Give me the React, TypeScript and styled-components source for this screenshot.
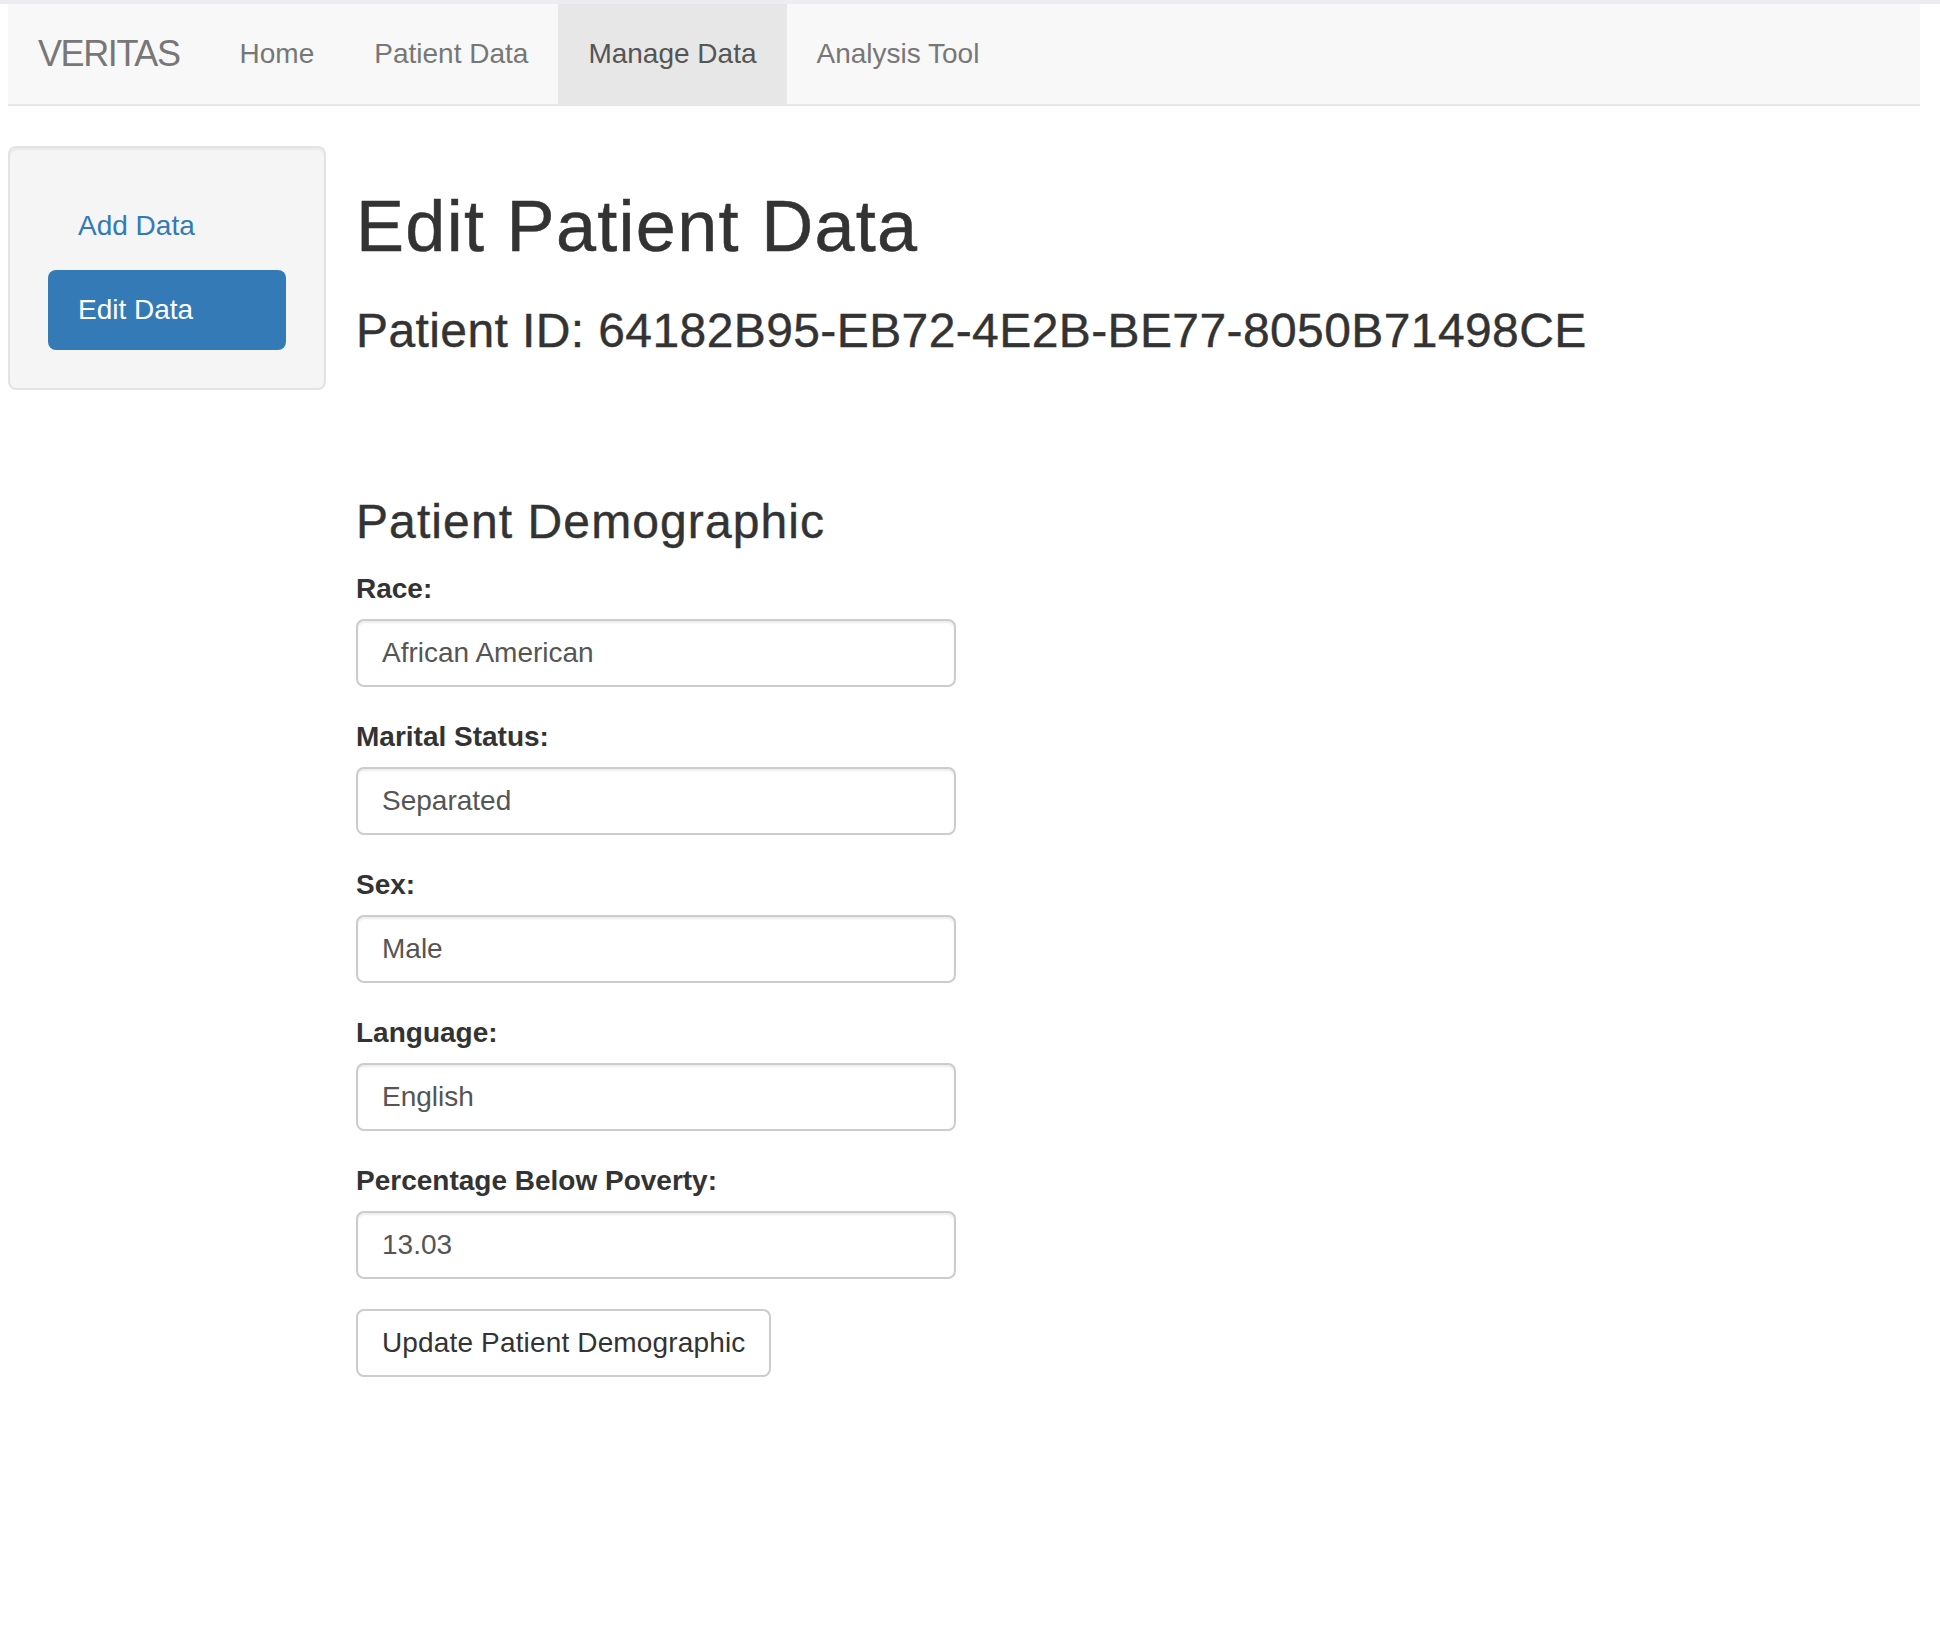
import React from "react";
import styled, { createGlobalStyle } from "styled-components";

const GlobalStyle = createGlobalStyle`
  html, body {
    margin: 0;
    padding: 0;
    background: #ffffff;
  }
  body {
    font-family: "Liberation Sans", Arial, Helvetica, sans-serif;
    font-size: 28px;
    line-height: 40px;
    color: #333333;
  }
  * { box-sizing: border-box; }
`;

const TopStrip = styled.div`
  height: 4px;
  background: #ececf1;
`;

const Page = styled.div`
  padding: 0 20px 0 8px;
`;

const Navbar = styled.nav`
  display: flex;
  align-items: stretch;
  height: 102px;
  background: #f8f8f8;
  border-bottom: 2px solid #e7e7e7;
  margin-bottom: 40px;
`;

const Brand = styled.a`
  display: block;
  padding: 30px;
  font-size: 36px;
  line-height: 40px;
  letter-spacing: -1.4px;
  color: #777777;
  text-decoration: none;
`;

const NavList = styled.ul`
  display: flex;
  margin: 0;
  padding: 0;
  list-style: none;
`;

const NavLink = styled.a<{ $active?: boolean }>`
  display: block;
  padding: 30px;
  font-size: 28px;
  line-height: 40px;
  text-decoration: none;
  color: ${(p) => (p.$active ? "#555555" : "#777777")};
  background: ${(p) => (p.$active ? "#e7e7e7" : "transparent")};
`;

const Layout = styled.div`
  display: grid;
  grid-template-columns: 318px 1fr;
  column-gap: 30px;
  align-items: start;
`;

const Well = styled.div`
  background: #f5f5f5;
  border: 2px solid #e3e3e3;
  border-radius: 8px;
  padding: 38px;
  box-shadow: inset 0 2px 2px rgba(0, 0, 0, 0.05);
`;

const Pills = styled.ul`
  display: flex;
  flex-direction: column;
  gap: 4px;
  margin: 0;
  padding: 0;
  list-style: none;
`;

const Pill = styled.a<{ $active?: boolean }>`
  display: block;
  padding: 20px 30px;
  font-size: 28px;
  line-height: 40px;
  border-radius: 8px;
  text-decoration: none;
  color: ${(p) => (p.$active ? "#ffffff" : "#337ab7")};
  background: ${(p) => (p.$active ? "#337ab7" : "transparent")};
`;

const Main = styled.main`
  min-width: 0;
`;

const Title = styled.h1`
  margin: 41px 0 20px;
  font-size: 72px;
  line-height: 1.1;
  font-weight: 500;
  letter-spacing: 1.3px;
  color: #333333;
  -webkit-text-stroke: 0.5px #333333;
`;

const SubTitle = styled.h3<{ $gap?: number; $tracking?: number }>`
  margin: ${(p) => p.$gap ?? 39}px 0 20px;
  font-size: 48px;
  line-height: 1.1;
  font-weight: 500;
  letter-spacing: ${(p) => p.$tracking ?? 0.4}px;
  color: #333333;
  -webkit-text-stroke: 0.4px #333333;
`;

const FormGroup = styled.div`
  margin-bottom: 30px;
`;

const Label = styled.label`
  display: inline-block;
  margin-bottom: 10px;
  font-size: 28px;
  line-height: 40px;
  font-weight: 700;
  color: #333333;
`;

const TextInput = styled.input`
  display: block;
  width: 600px;
  height: 68px;
  padding: 12px 24px;
  font-family: inherit;
  font-size: 28px;
  line-height: 40px;
  color: #555555;
  background: #ffffff;
  border: 2px solid #cccccc;
  border-radius: 8px;
  box-shadow: inset 0 2px 2px rgba(0, 0, 0, 0.075);
  outline: none;
`;

const Button = styled.button`
  display: inline-block;
  padding: 12px 24px;
  font-family: inherit;
  font-size: 28px;
  line-height: 40px;
  letter-spacing: 0.15px;
  color: #333333;
  background: #ffffff;
  border: 2px solid #cccccc;
  border-radius: 8px;
  cursor: pointer;
`;

const navItems = ["Home", "Patient Data", "Manage Data", "Analysis Tool"];

const fields = [
  { label: "Race:", value: "African American" },
  { label: "Marital Status:", value: "Separated" },
  { label: "Sex:", value: "Male" },
  { label: "Language:", value: "English" },
  { label: "Percentage Below Poverty:", value: "13.03" },
];

export default function App() {
  return (
    <>
      <GlobalStyle />
      <TopStrip />
      <Page>
        <Navbar>
          <Brand href="#">VERITAS</Brand>
          <NavList>
            {navItems.map((item) => (
              <li key={item}>
                <NavLink href="#" $active={item === "Manage Data"}>
                  {item}
                </NavLink>
              </li>
            ))}
          </NavList>
        </Navbar>
        <Layout>
          <Well>
            <Pills>
              <li>
                <Pill href="#">Add Data</Pill>
              </li>
              <li>
                <Pill href="#" $active>
                  Edit Data
                </Pill>
              </li>
            </Pills>
          </Well>
          <Main>
            <Title>Edit Patient Data</Title>
            <SubTitle>Patient ID: 64182B95-EB72-4E2B-BE77-8050B71498CE</SubTitle>
            <SubTitle $gap={138} $tracking={1.1}>
              Patient Demographic
            </SubTitle>
            {fields.map((f) => (
              <FormGroup key={f.label}>
                <Label>{f.label}</Label>
                <TextInput type="text" defaultValue={f.value} readOnly />
              </FormGroup>
            ))}
            <Button type="button">Update Patient Demographic</Button>
          </Main>
        </Layout>
      </Page>
    </>
  );
}
